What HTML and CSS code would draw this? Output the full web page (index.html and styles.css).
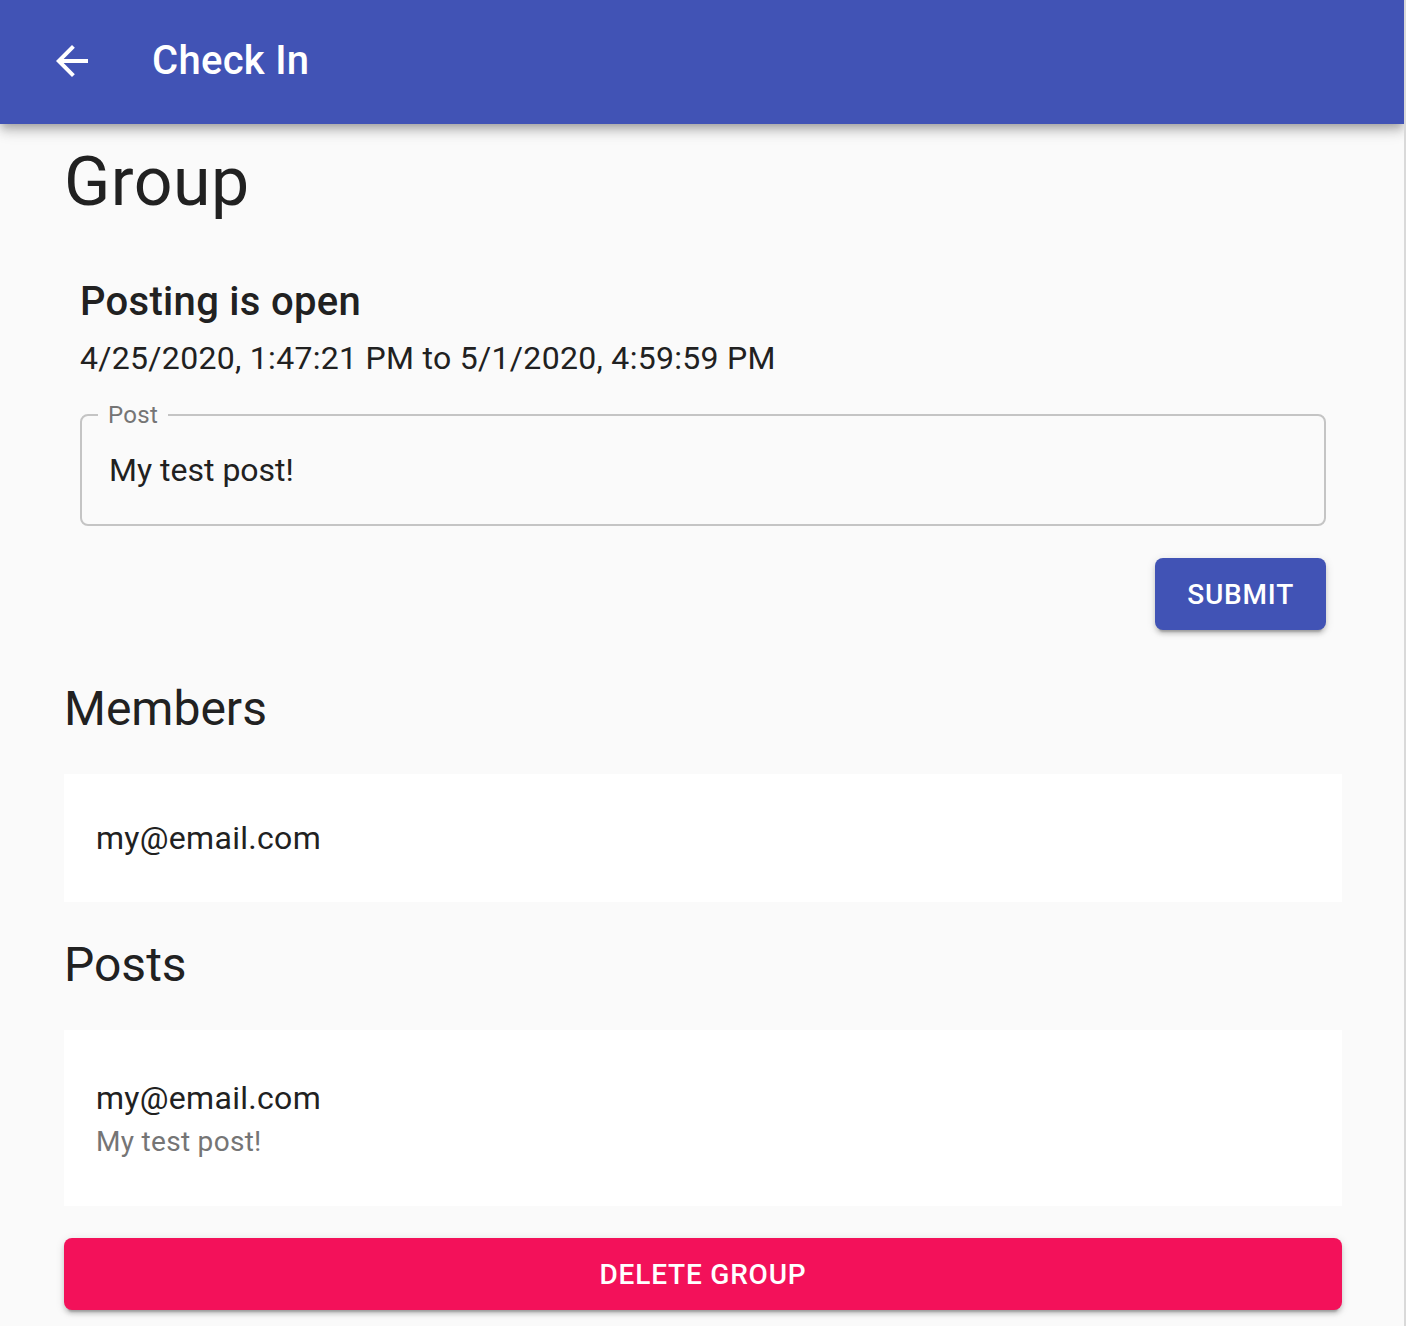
FILE: index.html
```html
<!DOCTYPE html>
<html lang="en">
<head>
<meta charset="utf-8">
<title>Check In</title>
<link rel="stylesheet" href="styles.css">
</head>
<body>
<header class="appbar">
  <button class="icon-btn" aria-label="Back">
    <svg viewBox="0 0 24 24" width="48" height="48" aria-hidden="true"><path d="M20 11H7.83l5.59-5.59L12 4l-8 8 8 8 1.41-1.41L7.83 13H20v-2z"/></svg>
  </button>
  <h1 class="appbar-title">Check In</h1>
</header>
<main class="container">
  <h2 class="page-title">Group</h2>
  <section class="posting">
    <h3 class="posting-title">Posting is open</h3>
    <p class="posting-range">4/25/2020, 1:47:21 PM to 5/1/2020, 4:59:59 PM</p>
    <fieldset class="field">
      <legend class="field-label">Post</legend>
      <div class="field-input">My test post!</div>
    </fieldset>
    <div class="actions">
      <button class="btn btn-primary">Submit</button>
    </div>
  </section>
  <h2 class="section-title">Members</h2>
  <ul class="list">
    <li class="list-item"><span class="primary">my@email.com</span></li>
  </ul>
  <h2 class="section-title">Posts</h2>
  <ul class="list">
    <li class="list-item list-item-two"><span class="primary">my@email.com</span><span class="secondary">My test post!</span></li>
  </ul>
  <button class="btn btn-danger">Delete Group</button>
</main>
</body>
</html>
```
FILE: styles.css
```css
* { box-sizing: border-box; }
html, body { margin: 0; padding: 0; }
body {
  background: #fafafa;
  font-family: Roboto, "Noto Sans", "Liberation Sans", sans-serif;
  color: #212121;
  min-height: 1326px;
  border-right: 2px solid #d9d9d9;
}
.appbar {
  height: 124px;
  background: #4153b5;
  color: #fff;
  display: flex;
  align-items: center;
  padding: 0 48px 2px 24px;
  box-shadow: 0 4px 8px -2px rgba(0,0,0,0.2), 0 8px 10px 0 rgba(0,0,0,0.14), 0 2px 20px 0 rgba(0,0,0,0.12);
  position: relative;
  z-index: 2;
}
.icon-btn {
  width: 96px;
  height: 96px;
  padding: 24px;
  border: 0;
  background: transparent;
  display: flex;
  align-items: center;
  justify-content: center;
  margin-right: 32px;
  cursor: pointer;
}
.icon-btn svg { fill: #fff; display: block; }
.appbar-title {
  margin: 0;
  font-size: 40px;
  font-weight: 500;
  line-height: 64px;
  letter-spacing: 0.3px;
}
.container {
  padding: 16px 62px 16px 64px;
  display: flex;
  flex-direction: column;
}
.page-title {
  margin: 0;
  font-size: 68px;
  font-weight: 400;
  line-height: 84px;
  letter-spacing: 0.5px;
}
.posting {
  margin-top: 30px;
  padding: 16px;
}
.posting-title {
  margin: 0;
  font-size: 40px;
  font-weight: 500;
  line-height: 64px;
  letter-spacing: 0.3px;
}
.posting-range {
  margin: 0;
  font-size: 32px;
  line-height: 48px;
  letter-spacing: 0.3px;
}
.field {
  margin: 21px 0 0;
  padding: 0 16px;
  border: 2px solid #c4c4c4;
  border-radius: 8px;
  min-width: 0;
}
.field-label {
  padding: 0 10px;
  font-size: 24px;
  line-height: 24px;
  color: #757575;
  letter-spacing: 0.3px;
}
.field-input {
  padding: 24px 11px 35px;
  font-size: 32px;
  line-height: 38px;
}
.actions {
  display: flex;
  justify-content: flex-end;
  margin-top: 32px;
}
.btn {
  font-family: Roboto, "Noto Sans", "Liberation Sans", sans-serif;
  height: 72px;
  border: 0;
  border-radius: 8px;
  color: #fff;
  font-size: 28px;
  font-weight: 500;
  text-transform: uppercase;
  letter-spacing: 0.8px;
  box-shadow: 0 6px 2px -4px rgba(0,0,0,0.2), 0 4px 4px 0 rgba(0,0,0,0.14), 0 2px 10px 0 rgba(0,0,0,0.12);
  cursor: pointer;
}
.btn-primary {
  background: #4153b5;
  padding: 0 32px;
}
.btn-danger {
  background: #f3115a;
  width: 100%;
  margin-top: 32px;
}
.section-title {
  margin: 31px 0 33px;
  font-size: 48px;
  font-weight: 400;
  line-height: 64px;
}
.list {
  list-style: none;
  margin: 0;
  padding: 16px 0;
  background: #fff;
}
.list-item {
  padding: 24px 32px;
  display: flex;
  flex-direction: column;
}
.list-item-two { padding: 28px 32px; }
.primary {
  font-size: 32px;
  line-height: 48px;
  letter-spacing: 0.3px;
}
.secondary {
  font-size: 28px;
  line-height: 40px;
  color: #757575;
  letter-spacing: 0.3px;
}
```
